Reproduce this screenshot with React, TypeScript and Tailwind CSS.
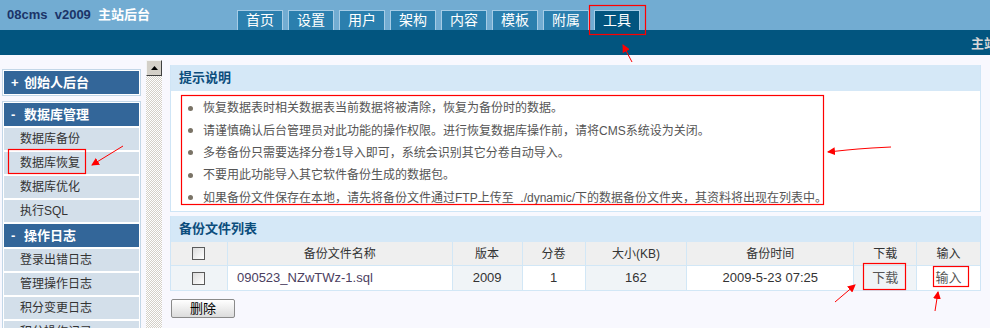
import React from "react";

const tabs = ["首页", "设置", "用户", "架构", "内容", "模板", "附属", "工具"];

const tips = [
  <>恢复数据表时相关数据表当前数据将被清除，恢复为备份时的数据。</>,
  <>请谨慎确认后台管理员对此功能的操作权限。进行恢复数据库操作前，请将CMS系统设为关闭。</>,
  <>多卷备份只需要选择分卷1导入即可，系统会识别其它分卷自动导入。</>,
  <>不要用此功能导入其它软件备份生成的数据包。</>,
  <>如果备份文件保存在本地，请先将备份文件通过FTP上传至&nbsp; ./dynamic/下的数据备份文件夹，其资料将出现在列表中。</>,
];

function Check() {
  return (
    <span className="inline-block w-[13px] h-[13px] border border-[#5a5a5a] bg-gradient-to-br from-[#dcdcdc] to-white align-middle" />
  );
}

function SideItem({ label }: { label: string }) {
  return (
    <div className="h-[22px] shrink-0 bg-[#d3dfea] pl-[16px] flex items-center text-[12px] text-[#333]">
      {label}
    </div>
  );
}

function SideHead({ sign, label }: { sign: string; label: string }) {
  return (
    <div className="h-[23px] shrink-0 bg-[#336699] flex items-center text-white font-bold text-[13px]">
      <span className="w-[20px] pl-[7px]">{sign}</span>
      <span>{label}</span>
    </div>
  );
}

// red markup drawn over the screenshot
function Annotations() {
  const red = "#ff0000";
  return (
    <svg className="absolute left-0 top-0 pointer-events-none" width={990} height={328}>
      <defs>
        <marker id="ah" markerWidth="8" markerHeight="8" refX="7" refY="4" orient="auto" markerUnits="userSpaceOnUse">
          <path d="M0 0 L8 4 L0 8 Z" fill={red} />
        </marker>
      </defs>
      <rect x={589.5} y={5.5} width={56} height={29} fill="none" stroke={red} strokeWidth={1.2} />
      <line x1={632} y1={62} x2={623} y2={45} stroke={red} strokeWidth={1} markerEnd="url(#ah)" />
      <rect x={8.5} y={149.5} width={77} height={24} fill="none" stroke={red} strokeWidth={1.2} />
      <line x1={123} y1={146} x2={92} y2={165} stroke={red} strokeWidth={1} markerEnd="url(#ah)" />
      <rect x={181.5} y={95.5} width={642} height={109} fill="none" stroke={red} strokeWidth={1.2} />
      <polyline points="891,147 872,148 858,149 847,150 828,152" fill="none" stroke={red} strokeWidth={1} markerEnd="url(#ah)" />
      <rect x={863.5} y={263.5} width={42} height={26} fill="none" stroke={red} strokeWidth={1.2} />
      <line x1={835} y1={302} x2={855} y2={285} stroke={red} strokeWidth={1} markerEnd="url(#ah)" />
      <rect x={933.5} y={266.5} width={35} height={20} fill="none" stroke={red} strokeWidth={1.2} />
      <line x1={935} y1={311} x2={938} y2={292} stroke={red} strokeWidth={1} markerEnd="url(#ah)" />
    </svg>
  );
}

export default function App() {
  const cols = [
    { w: "w-[57px]", head: <Check />, cell: <Check />, shade: true },
    { w: "w-[225px]", head: "备份文件名称", cell: <span className="w-full text-left pl-[9px] text-[#4b405f]">090523_NZwTWz-1.sql</span>, shade: false },
    { w: "w-[70px]", head: "版本", cell: "2009", shade: true },
    { w: "w-[63px]", head: "分卷", cell: "1", shade: false },
    { w: "w-[102px]", head: "大小(KB)", cell: "162", shade: true },
    { w: "w-[167px]", head: "备份时间", cell: "2009-5-23 07:25", shade: false },
    { w: "w-[63px]", head: "下载", cell: <span className="text-[#555] text-[13px]">下载</span>, shade: true },
    { w: "w-[63px]", head: "输入", cell: <span className="text-[#555] text-[13px]">输入</span>, shade: false },
  ];

  return (
    <div
      className="relative w-[990px] h-[328px] overflow-hidden bg-[#f8f8fe]"
      style={{ fontFamily: '"Liberation Sans", "Noto Sans CJK SC", sans-serif' }}
    >
      {/* top bar */}
      <div className="h-[30px] bg-[#72acd2] flex">
        <div className="w-[237px] pl-[7px] pt-[7px] text-[13px] font-bold leading-[16px]">
          <span className="text-[#1b3468]">08cms&nbsp; v2009</span>
          <span className="text-white">&nbsp; 主站后台</span>
        </div>
        <div className="flex items-end gap-[5px]">
          {tabs.map((t) => (
            <div
              key={t}
              className={`w-[46px] h-[20px] border border-b-0 border-[#a6cce6] flex items-center justify-center text-white text-[14px] ${
                t === "工具" ? "bg-[#02557f]" : "bg-[#2b7fae]"
              }`}
            >
              {t}
            </div>
          ))}
        </div>
      </div>
      <div className="h-[25px] bg-[#02557f] flex overflow-hidden pl-[971px]">
        <span className="shrink-0 pt-[4px] text-[13px] font-bold text-[#d8d8d8] whitespace-nowrap">主站后台</span>
      </div>

      {/* body */}
      <div className="flex">
        {/* sidebar */}
        <div className="w-[146px] pl-[2px] pt-[14px] flex flex-col gap-[5px]">
          <div className="w-[139px] border border-[#c3d7e8] bg-white p-[1px]">
            <SideHead sign="+" label="创始人后台" />
          </div>
          <div className="w-[139px] border border-[#c3d7e8] bg-white px-[1px] pt-[1px] flex flex-col gap-[2px] h-[240px] overflow-hidden">
            <SideHead sign="-" label="数据库管理" />
            <SideItem label="数据库备份" />
            <SideItem label="数据库恢复" />
            <SideItem label="数据库优化" />
            <SideItem label="执行SQL" />
            <SideHead sign="-" label="操作日志" />
            <SideItem label="登录出错日志" />
            <SideItem label="管理操作日志" />
            <SideItem label="积分变更日志" />
            <SideItem label="积分操作记录" />
          </div>
        </div>

        {/* scrollbar */}
        <div className="w-[16px] pt-[5px] flex flex-col">
          <div className="h-[16px] bg-[#d4d0c8] border border-t-[#f4f4f4] border-l-[#f4f4f4] border-r-[#404040] border-b-[#404040] flex items-center justify-center">
            <svg width="7" height="4" viewBox="0 0 7 4">
              <path d="M3.5 0 L7 4 L0 4 Z" fill="#000" />
            </svg>
          </div>
          <div className="h-[260px] bg-[repeating-conic-gradient(#d4d0c8_0_25%,#ffffff_0_50%)] bg-[length:2px_2px]" />
        </div>

        {/* main */}
        <div className="ml-[8px] w-[811px] pt-[10px]">
          <div className="border border-[#cfe5f6] border-t-0">
            <div className="h-[26px] bg-[#d5e8f7] flex items-center pl-[8px] text-[13px] font-bold text-[#0b4d7c]">
              提示说明
            </div>
            <div className="bg-white pt-[5px] pb-[6px] pl-[11px]">
              <ul className="w-[642px] h-[109px] pt-[1px]">
                {tips.map((t, i) => (
                  <li key={i} className="h-[22.4px] flex items-center text-[12px] text-[#555] whitespace-nowrap">
                    <span className="shrink-0 w-[5px] h-[5px] rounded-full bg-[#7a7366] ml-[6px] mr-[10px]" />
                    <span>{t}</span>
                  </li>
                ))}
              </ul>
            </div>
          </div>

          <div className="mt-[4px] border border-[#cfe5f6] border-t-0 border-b-0">
            <div className="h-[26px] bg-[#d5e8f7] flex items-center pl-[8px] text-[13px] font-bold text-[#0b4d7c]">
              备份文件列表
            </div>
            <div className="flex bg-[#efefef] h-[24px] border-b border-[#d2e7f6]">
              {cols.map((c, i) => (
                <div
                  key={i}
                  className={`${c.w} flex items-center justify-center text-[12px] text-[#333] ${i < cols.length - 1 ? "border-r border-[#d2e7f6]" : ""}`}
                >
                  {c.head}
                </div>
              ))}
            </div>
            <div className="flex h-[25px] border-b border-[#d2e7f6]">
              {cols.map((c, i) => (
                <div
                  key={i}
                  className={`${c.w} flex items-center justify-center text-[13px] text-[#333] ${c.shade ? "bg-[#f0f4f7]" : "bg-white"} ${i < cols.length - 1 ? "border-r border-[#d2e7f6]" : ""}`}
                >
                  {c.cell}
                </div>
              ))}
            </div>
          </div>

          <button className="mt-[8px] ml-[1px] w-[64px] h-[19px] rounded-[2px] border border-[#8a8a8a] bg-gradient-to-b from-white to-[#dcdcdc] text-[13px] text-black leading-none">
            删除
          </button>
        </div>
      </div>

      <Annotations />
    </div>
  );
}
